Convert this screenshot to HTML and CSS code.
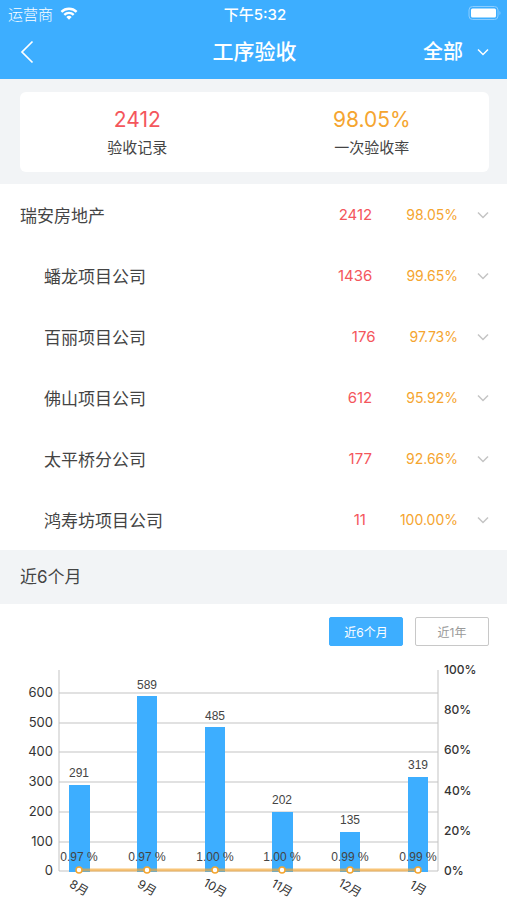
FILE: index.html
```html
<!DOCTYPE html>
<html lang="zh-CN">
<head>
<meta charset="utf-8">
<meta name="viewport" content="width=device-width, initial-scale=1">
<title>工序验收</title>
<link rel="stylesheet" href="styles.css">
</head>
<body>
<header class="top">
  <div class="status">
    <div class="carrier">
      <span>运营商</span>
      <svg class="wifi" viewBox="0 0 18 13" aria-hidden="true">
        <path d="M9 12.8 6.3 10a3.9 3.9 0 0 1 5.4 0z" fill="#fff"/>
        <path d="M4.3 7.8a6.8 6.8 0 0 1 9.4 0M1.4 4.8a11 11 0 0 1 15.2 0" fill="none" stroke="#fff" stroke-width="2.4"/>
      </svg>
    </div>
    <time class="clock">下午5:32</time>
    <svg class="battery" viewBox="0 0 34 14" aria-hidden="true">
      <rect x="1" y="0.5" width="29" height="13" rx="3.5" fill="none" stroke="#8bcdff"/>
      <rect x="3" y="2.5" width="25" height="9" rx="1.5" fill="#fff"/>
      <path d="M31.5 5v4c1.300-.5 1.300-3.500 0-4z" fill="#8bcdff"/>
    </svg>
  </div>
  <nav class="nav">
    <button class="back" type="button" aria-label="返回">
      <svg class="back-icon" viewBox="0 0 14 24" aria-hidden="true"><path d="M12.500 1.500 2 12l10.500 10.500" fill="none" stroke="#fff" stroke-width="1.700"/></svg>
    </button>
    <h1 class="title">工序验收</h1>
    <div class="filter">
      <select class="filter-select" aria-label="筛选"><option>全部</option></select>
      <svg class="chevron" viewBox="0 0 12 8" aria-hidden="true"><path d="M1 1.500l5 5 5-5" fill="none" stroke="#fff" stroke-width="1.500"/></svg>
    </div>
  </nav>
</header>
<main>
  <section class="summary">
    <dl class="card">
      <div class="stat"><dt class="label">验收记录</dt><dd class="figure red">2412</dd></div>
      <div class="stat"><dt class="label">一次验收率</dt><dd class="figure orange">98.05%</dd></div>
    </dl>
  </section>
  <ul class="companies">
    <li class="row"><span class="name">瑞安房地产</span><span class="count red">2412</span><span class="orange">98.05%</span><button class="expand" type="button" aria-label="展开瑞安房地产"><svg class="chevron" viewBox="0 0 12 8" aria-hidden="true"><path d="M1 1.500l5 5 5-5"/></svg></button></li>
    <li class="row child"><span class="name">蟠龙项目公司</span><span class="count red">1436</span><span class="orange">99.65%</span><button class="expand" type="button" aria-label="展开蟠龙项目公司"><svg class="chevron" viewBox="0 0 12 8" aria-hidden="true"><path d="M1 1.500l5 5 5-5"/></svg></button></li>
    <li class="row child"><span class="name">百丽项目公司</span><span class="count red">176</span><span class="orange">97.73%</span><button class="expand" type="button" aria-label="展开百丽项目公司"><svg class="chevron" viewBox="0 0 12 8" aria-hidden="true"><path d="M1 1.500l5 5 5-5"/></svg></button></li>
    <li class="row child"><span class="name">佛山项目公司</span><span class="count red">612</span><span class="orange">95.92%</span><button class="expand" type="button" aria-label="展开佛山项目公司"><svg class="chevron" viewBox="0 0 12 8" aria-hidden="true"><path d="M1 1.500l5 5 5-5"/></svg></button></li>
    <li class="row child"><span class="name">太平桥分公司</span><span class="count red">177</span><span class="orange">92.66%</span><button class="expand" type="button" aria-label="展开太平桥分公司"><svg class="chevron" viewBox="0 0 12 8" aria-hidden="true"><path d="M1 1.500l5 5 5-5"/></svg></button></li>
    <li class="row child"><span class="name">鸿寿坊项目公司</span><span class="count red">11</span><span class="orange">100.00%</span><button class="expand" type="button" aria-label="展开鸿寿坊项目公司"><svg class="chevron" viewBox="0 0 12 8" aria-hidden="true"><path d="M1 1.500l5 5 5-5"/></svg></button></li>
  </ul>
  <section>
    <h2 class="section-title">近6个月</h2>
    <div class="ranges">
      <button class="range active" type="button" aria-pressed="true">近6个月</button>
      <button class="range" type="button" aria-pressed="false">近1年</button>
    </div>
    <svg class="chart" viewBox="0 0 507 240" role="img" aria-label="近6个月验收记录与一次验收率">
      <path class="grid" d="M59 33H438M59 63H438M59 92H438M59 122H438M59 152H438M59 182H438M59 211H438M59 10V211M438 10V211"/>
      <g class="bars">
        <rect x="69" y="125" width="21" height="87"/>
        <rect x="137" y="36" width="20" height="176"/>
        <rect x="205" y="67" width="20" height="145"/>
        <rect x="272" y="152" width="21" height="60"/>
        <rect x="340" y="172" width="20" height="40"/>
        <rect x="408" y="117" width="20" height="95"/>
      </g>
      <path class="line" d="M79 210H418"/>
      <g class="dots">
        <circle cx="79" cy="210" r="3"/><circle cx="147" cy="210" r="3"/><circle cx="215" cy="210" r="3"/><circle cx="282" cy="210" r="3"/><circle cx="350" cy="210" r="3"/><circle cx="418" cy="210" r="3"/>
      </g>
      <g class="values">
        <text x="79" y="117">291</text><text x="147" y="29">589</text><text x="215" y="60">485</text><text x="282" y="144">202</text><text x="350" y="164">135</text><text x="418" y="109">319</text>
        <text x="79" y="201">0.97 %</text><text x="147" y="201">0.97 %</text><text x="215" y="201">1.00 %</text><text x="282" y="201">1.00 %</text><text x="350" y="201">0.99 %</text><text x="418" y="201">0.99 %</text>
      </g>
      <g class="axis left">
        <text x="53" y="37">600</text><text x="53" y="67">500</text><text x="53" y="96">400</text><text x="53" y="126">300</text><text x="53" y="156">200</text><text x="53" y="186">100</text><text x="53" y="215">0</text>
      </g>
      <g class="axis right">
        <text x="444" y="14">100%</text><text x="444" y="54">80%</text><text x="444" y="94">60%</text><text x="444" y="135">40%</text><text x="444" y="175">20%</text><text x="444" y="215">0%</text>
      </g>
      <g class="axis months">
        <text transform="translate(79 228) rotate(30)" y="4">8月</text>
        <text transform="translate(147 228) rotate(30)" y="4">9月</text>
        <text transform="translate(215 228) rotate(30)" y="4">10月</text>
        <text transform="translate(282 228) rotate(30)" y="4">11月</text>
        <text transform="translate(350 228) rotate(30)" y="4">12月</text>
        <text transform="translate(418 228) rotate(30)" y="4">1月</text>
      </g>
    </svg>
  </section>
</main>
</body>
</html>
```
FILE: styles.css
```css
* { box-sizing: border-box; }
body, h1, h2, dl, dd, ul { margin: 0; padding: 0; }
body {
  background: #fff;
  color: #444;
  font-family: Inter, "Noto Sans CJK SC", sans-serif;
  font-size: 14px;
}
button, select {
  appearance: none;
  border: 0;
  padding: 0;
  margin: 0;
  background: none;
  color: inherit;
  font: inherit;
}
svg { display: block; }
.red { color: #f4565c; }
.orange { color: #f5a52f; }

.top { height: 79px; background: #3daeff; color: #fff; }
.status {
  display: grid;
  grid-template-columns: 1fr auto 1fr;
  align-items: center;
  height: 26px;
  padding: 0 5px 0 8px;
}
.carrier { display: flex; align-items: center; gap: 7px; font-size: 15px; font-weight: 300; }
.wifi { width: 18px; height: 13px; }
.clock { font-size: 15px; font-weight: 500; }
.battery { width: 34px; height: 14px; justify-self: end; }
.nav {
  display: grid;
  grid-template-columns: 1fr auto 1fr;
  align-items: center;
  height: 52px;
  padding: 0 18px 0 20px;
}
.back { width: 32px; height: 32px; }
.back-icon { width: 14px; height: 24px; }
.title { font-size: 21px; line-height: 30px; font-weight: 500; }
.filter { display: flex; align-items: center; justify-content: flex-end; gap: 14px; }
.filter-select { font-size: 20px; line-height: 30px; font-weight: 500; }
.filter-select option { color: #444; }
.chevron { width: 12px; height: 8px; }

.summary { background: #f2f4f6; padding: 13px 18px 12px 20px; }
.card {
  display: grid;
  grid-template-columns: 1fr 1fr;
  height: 80px;
  padding-top: 3px;
  background: #fff;
  border-radius: 6px;
}
.stat {
  display: flex;
  flex-direction: column-reverse;
  justify-content: center;
  align-items: center;
}
.label { font-size: 15px; line-height: 28px; }
.figure { font-size: 21px; line-height: 28px; }

.companies { list-style: none; }
.row {
  display: flex;
  align-items: center;
  gap: 34px;
  height: 61px;
  padding: 0 18px 0 20px;
}
.child { padding-left: 44px; }
.name { flex: 1; font-size: 17px; }
.count { font-size: 15px; }
.expand { width: 12px; height: 32px; margin-left: -15px; }
.expand path { fill: none; stroke: #c4c4c4; stroke-width: 1.5; }

.section-title {
  padding: 0 20px;
  background: #f2f4f6;
  font-size: 17px;
  line-height: 54px;
  font-weight: 400;
}
.ranges {
  display: flex;
  justify-content: flex-end;
  gap: 12px;
  padding: 13px 18px 14px;
}
.range {
  width: 74px;
  height: 29px;
  border: 1px solid #c8c8c8;
  border-radius: 2px;
  color: #999;
  font-size: 12px;
}
.range.active { background: #3daeff; border-color: #3daeff; color: #fff; }

.chart { width: 100%; height: auto; }
.grid { fill: none; stroke: #c3c3c3; stroke-width: 1; }
.bars { fill: #3daeff; }
.line { stroke: #f5a52f; stroke-width: 3; opacity: 0.65; }
.dots { fill: #fff; stroke: #f5a52f; stroke-width: 1.5; }
.values {
  fill: #444;
  font-family: "Liberation Sans", sans-serif;
  font-size: 12px;
  text-anchor: middle;
}
.axis { fill: #333; font-size: 12px; }
.left { font-size: 13px; text-anchor: end; }
.right { font-weight: 500; }
.months { text-anchor: middle; }
```
